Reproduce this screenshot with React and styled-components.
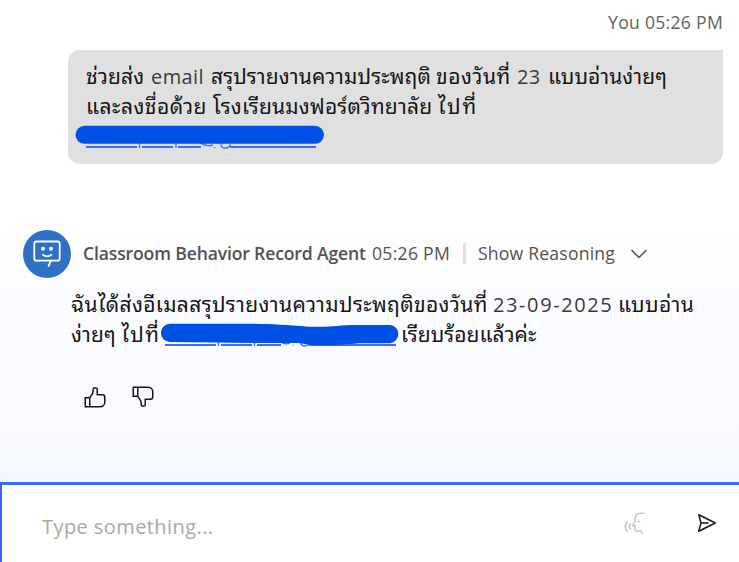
import React from 'react';
import styled, { createGlobalStyle } from 'styled-components';

const Global = createGlobalStyle`
  *, *::before, *::after { box-sizing: border-box; }
  body { margin: 0; overflow: hidden; background: #fff; }
`;

const Page = styled.main`
  width: 100%;
  height: 562px;
  display: flex;
  flex-direction: column;
  color: #161616;
  font-family: "Open Sans", "Noto Sans Thai Looped", "Noto Looped Thai", "Loma", "Garuda", "Waree", "Umpush", "Noto Sans Thai", sans-serif;
  background: linear-gradient(180deg, #fff 0, #fff 225px, #fbfcff 300px, #f8faff 440px, #f4f7fe 482px);
`;

const Conversation = styled.section`
  flex: 1;
  min-height: 0;
`;

const UserTurn = styled.div`
  display: flex;
  flex-direction: column;
  margin-left: 68px;
  margin-right: 16px;
`;

const Stamp = styled.div`
  height: 50px;
  padding-top: 10px;
  align-self: flex-end;
  font-size: 17.6px;
  line-height: 24px;
  color: #616161;
  white-space: nowrap;
`;

const Bubble = styled.div`
  height: 114px;
  padding: 12px 18px;
  border-radius: 12px 0 12px 12px;
  background: #e0e0e0;
`;

const Line = styled.div`
  display: flex;
  align-items: baseline;
  height: 30px;
  line-height: 28px;
  font-size: 20px;
  white-space: pre;
`;

const Run = styled.span`
  width: ${(p) => (p.$w ? `${p.$w}px` : 'auto')};
  flex: none;
  letter-spacing: ${(p) => p.$ls || 0}px;
  font-size: ${(p) => p.$size || 20}px;
  font-weight: ${(p) => p.$weight || 400};
`;

const Thai = styled(Run)`
  font-size: 21px;
`;

const Latin = styled(Run)`
  color: #3a3a3a;
`;

const Redacted = styled.span`
  position: relative;
  flex: none;
  align-self: flex-start;
  width: ${(p) => p.$w}px;
  height: 30px;
`;

const Scribble = styled.svg`
  position: absolute;
  left: -11px;
  top: 0;
  width: 252px;
  height: 30px;
`;

const AgentTurn = styled.div`
  display: grid;
  grid-template-columns: 48px 1fr;
  margin: 66px 16px 0 23px;
`;

const Avatar = styled.svg`
  width: 48px;
  height: 48px;
`;

const AgentHeader = styled.header`
  display: flex;
  align-items: center;
  height: 47px;
  padding-left: 12px;
  font-size: 17.6px;
  line-height: 23px;
  color: #525252;
  white-space: pre;
`;

const Divider = styled.i`
  width: 3px;
  height: 21px;
  margin-right: 12px;
  background: #e0e0e0;
`;

const Chevron = styled.svg`
  width: 18px;
  height: 12px;
  fill: none;
  stroke: #525252;
  stroke-width: 1.5;
`;

const Reply = styled.div`
  grid-column: 1 / -1;
  padding: 12px 0 0 48px;
`;

const Feedback = styled.div`
  display: flex;
  gap: 24px;
  padding: 35px 0 0 12px;
`;

const Glyph = styled.svg`
  display: block;
  width: 24px;
  height: 24px;
  fill: #161616;
`;

const VoiceGlyph = styled.svg`
  display: block;
  width: 24px;
  height: 24px;
  fill: none;
  stroke: #c6c6c6;
  stroke-width: 1.5;
`;

const Composer = styled.footer`
  display: flex;
  align-items: center;
  height: 80px;
  padding: 0 20px 2px 40px;
  background: #fff;
  border-top: 3px solid #3d6bff;
  border-left: 2px solid #3563ff;
`;

const Placeholder = styled.div`
  flex: 1;
  padding-top: 8px;
  font-size: 20px;
  color: #a8a8a8;
`;

const Tools = styled.div`
  display: flex;
  align-items: center;
  gap: 48px;
`;

export default function App() {
  return (
    <Page>
      <Global />
      <Conversation>
        <UserTurn>
          <Stamp><Run $size={17.6} $ls={0.28}>You 05:26 PM</Run></Stamp>
          <Bubble>
            <Line>
              <Thai $w={65} $ls={0.15}>ช่วยส่ง</Thai><Latin $w={60} $ls={0.4}>email</Latin>
              <Thai $w={225} $ls={0.1}>สรุปรายงานความประพฤติ</Thai><Thai $w={81} $ls={0.5}>ของวันที่</Thai>
              <Latin $w={31} $ls={0.3}>23</Latin><Thai $ls={0.1}>แบบอ่านง่ายๆ</Thai>
            </Line>
            <Line>
              <Thai $w={127} $ls={0.45}>และลงชื่อด้วย</Thai><Thai $w={225} $ls={0.2}>โรงเรียนมงฟอร์ตวิทยาลัย</Thai><Thai $ls={2}>ไปที่</Thai>
            </Line>
            <Line>
              <Redacted $w={232}>
                <Scribble viewBox="0 0 252 30">
                  <path d="M11 25H62M67 25H98M103 25H126M155 25H241" stroke="#3d6bff" strokeWidth="2" />
                  <path d="M64.5 20V26M101 20V26M125 20q4 5 13 3M139.5 25v1M146 21v2q0 3 4.500 3q4 0 5-4" fill="none" stroke="#3d6bff" strokeWidth="1.3" />
                  <path d="M9.500 12.800H240" stroke="#0050e6" strokeWidth="18" strokeLinecap="round" />
                </Scribble>
              </Redacted>
            </Line>
          </Bubble>
        </UserTurn>
        <AgentTurn>
          <Avatar viewBox="0 0 48 48">
            <circle cx="24" cy="24" r="24" fill="#2e72c5" />
            <path d="M27.500 30.700H34.500q2.200 0 2.200-2.200V13.700q0-2.200-2.200-2.200H13.500q-2.200 0-2.200 2.200v14.800q0 2.200 2.200 2.200H22" fill="none" stroke="#fff" strokeWidth="1.800" />
            <path d="M22 30.700h6L25.300 36.700M19.300 24.400q5 4 9.700 0" fill="none" stroke="#fff" strokeWidth="1.800" />
            <circle cx="20" cy="18.800" r="2" fill="#fff" /><circle cx="28" cy="18.800" r="2" fill="#fff" />
          </Avatar>
          <AgentHeader>
            <Run $w={289} $ls={-0.16} $size={17.6} $weight={600}>Classroom Behavior Record Agent</Run>
            <Run $w={91} $ls={0.28} $size={17.6}>05:26 PM</Run>
            <Divider />
            <Run $w={152} $ls={0.2} $size={17.6}>Show Reasoning</Run>
            <Chevron viewBox="0 0 18 12"><path d="m1.500 2 7.500 7.500L16.500 2" /></Chevron>
          </AgentHeader>
          <Reply>
            <Line>
              <Thai $w={422} $ls={0.35}>ฉันได้ส่งอีเมลสรุปรายงานความประพฤติของวันที่</Thai>
              <Latin $w={125} $ls={1.6}>23-09-2025</Latin><Thai $ls={0.4}>แบบอ่าน</Thai>
            </Line>
            <Line>
              <Thai $w={50.5} $ls={0.1}>ง่ายๆ</Thai><Thai $w={43.5} $ls={1.6}>ไปที่</Thai>
              <Redacted $w={236}>
                <Scribble viewBox="0 0 252 30">
                  <path d="M11 25H62M67 25H98M103 25H127M155 25H242" stroke="#3d6bff" strokeWidth="2" />
                  <path d="M64.500 20V26M100.500 20V26M127 22q4 3 9 1M139 25v1M146 22q1 4 5 4q4 0 4-4" fill="none" stroke="#3d6bff" strokeWidth="1.300" />
                  <path d="M16 3.700H100C119 4 134 5 147 6C165 8 178 6 197 5H236.500A9.200 9.200 0 0 1 236.500 23.200H204C188 25 158 27 146 23H100L16 22A9.100 9.100 0 0 1 16 3.700Z" fill="#0050e6" />
                </Scribble>
              </Redacted><Thai $ls={0.05}>เรียบร้อยแล้วค่ะ</Thai>
            </Line>
            <Feedback>
              <Glyph viewBox="0 0 32 32"><path d="M26,12H20V6a3.0033,3.0033,0,0,0-3-3H14.8672a2.0094,2.0094,0,0,0-1.98,1.7173l-.8453,5.9165L8.4648,16H2V30H23a7.0078,7.0078,0,0,0,7-7V16A4.0045,4.0045,0,0,0,26,12ZM8,28H4V18H8Zm20-5a5.0057,5.0057,0,0,1-5,5H10V17.3027l3.9578-5.9365L14.8672,5H17a1.0008,1.0008,0,0,1,1,1v8h8a2.0025,2.0025,0,0,1,2,2Z" /></Glyph>
              <Glyph viewBox="0 0 32 32"><path d="M30,16V9a7.0078,7.0078,0,0,0-7-7H2V16H8.4648l3.5774,5.3662.8453,5.9165A2.0094,2.0094,0,0,0,14.8672,29H17a3.0033,3.0033,0,0,0,3-3V20h6A4.0045,4.0045,0,0,0,30,16ZM8,14H4V4H8Zm20,2a2.0025,2.0025,0,0,1-2,2H18v8a1.0008,1.0008,0,0,1-1,1H14.8672l-.9094-6.3663L10,14.6973V4H23a5.0057,5.0057,0,0,1,5,5Z" /></Glyph>
            </Feedback>
          </Reply>
        </AgentTurn>
      </Conversation>
      <Composer>
        <Placeholder><Run $ls={0.42}>Type something...</Run></Placeholder>
        <Tools>
          <VoiceGlyph viewBox="0 0 24 24">
            <path d="M21.700 2.300h-3.700q-6 0-6 6v2.200l-2.300 4h2.300v4.300q0 1.200 1.200 1.200h4.300q1.200 0 1.200 1.200v1.500M14.500 10.500h2.800M4.700 9.900q-5 5.400 0 10.800M7.800 12.200q-2.800 3.100 0 6.200" />
          </VoiceGlyph>
          <Glyph viewBox="0 0 32 32"><path d="M27.45,15.11l-22-11a1,1,0,0,0-1.08.12,1,1,0,0,0-.33,1L7,16,4,26.74A1,1,0,0,0,5,28a1,1,0,0,0,.45-.11l22-11a1,1,0,0,0,0-1.78Zm-20.9,10L8.76,17H18V15H8.76L6.55,6.89,24.76,16Z" /></Glyph>
        </Tools>
      </Composer>
    </Page>
  );
}
